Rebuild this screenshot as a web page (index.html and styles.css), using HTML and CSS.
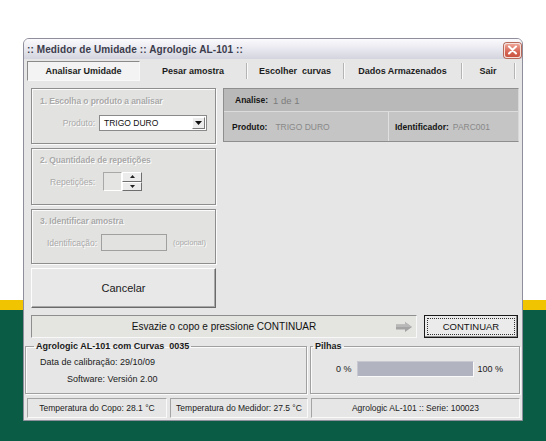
FILE: index.html
```html
<!DOCTYPE html>
<html lang="pt">
<head>
<meta charset="utf-8">
<title>Medidor de Umidade</title>
<link rel="stylesheet" href="styles.css">
</head>
<body>
<div class="window">
  <div class="titlebar">
    <span class="title">:: Medidor de Umidade :: Agrologic AL-101 ::</span>
    <div class="close"><svg width="11" height="10" viewBox="0 0 11 10"><path d="M2 1.5 L9 8.5 M9 1.5 L2 8.5" stroke="#fff" stroke-width="2" stroke-linecap="round"/></svg></div>
  </div>
  <div class="tabs">
    <div class="tab active t1">Analisar Umidade</div>
    <div class="tab t2">Pesar amostra</div>
    <div class="tab t3">Escolher&nbsp; curvas</div>
    <div class="tab t4">Dados Armazenados</div>
    <div class="tab t5">Sair</div>
  </div>
  <div class="main">
    <div class="leftcol">
      <div class="group g1">
        <div class="glabel">1. Escolha o produto a analisar</div>
        <div class="frow r1">
          <span class="flabel w55">Produto:</span>
          <div class="select"><span class="selval">TRIGO DURO</span><span class="selbtn"><svg width="7" height="4" viewBox="0 0 7 4"><path d="M0 0 H7 L3.5 4 Z" fill="#111"/></svg></span></div>
        </div>
      </div>
      <div class="group g2">
        <div class="glabel">2. Quantidade de repetições</div>
        <div class="frow r2">
          <span class="flabel w55">Repetições:</span>
          <div class="spin">
            <span class="spinbox"></span>
            <span class="spinbtns">
              <span class="sb"><svg width="5" height="3" viewBox="0 0 5 3"><path d="M0 3 H5 L2.5 0 Z" fill="#222"/></svg></span>
              <span class="sb"><svg width="5" height="3" viewBox="0 0 5 3"><path d="M0 0 H5 L2.5 3 Z" fill="#222"/></svg></span>
            </span>
          </div>
        </div>
      </div>
      <div class="group g3">
        <div class="glabel">3. Identificar amostra</div>
        <div class="frow r3">
          <span class="flabel w57">Identificação:</span>
          <span class="idbox"></span>
          <span class="opc">(opcional)</span>
        </div>
      </div>
      <div class="cancel">Cancelar</div>
    </div>
    <div class="info">
      <div class="inforow1"><b>Analise:</b><span class="gv">1 de 1</span></div>
      <div class="inforow2">
        <div class="cell c1"><b>Produto:</b><span class="gv2">TRIGO DURO</span></div>
        <div class="cell c2"><b>Identificador:</b><span class="gv2">PARC001</span></div>
      </div>
    </div>
  </div>
  <div class="msgrow">
    <div class="msg">
      <span class="msgtext">Esvazie o copo e pressione CONTINUAR</span>
      <svg class="arrow" width="16" height="10" viewBox="0 0 16 10"><path d="M0 2.5 H9 V0 L16 5 L9 10 V7.5 H0 Z" fill="#a4a4a4"/><path d="M0 2.5 H9 V0 L16 5 L9 5 H0 Z" fill="#b8b8b8"/></svg>
    </div>
    <div class="cont"><span class="focus">CONTINUAR</span></div>
  </div>
  <div class="bottom">
    <fieldset class="fs fs1">
      <legend>Agrologic AL-101 com Curvas&nbsp; 0035</legend>
      <div class="line l1">Data de calibração: 29/10/09</div>
      <div class="line l2">Software: Versión 2.00</div>
    </fieldset>
    <fieldset class="fs fs2">
      <legend>Pilhas</legend>
      <div class="prow">
        <span class="p0">0 %</span>
        <span class="pbar"></span>
        <span class="p100">100 %</span>
      </div>
    </fieldset>
  </div>
  <div class="status">
    <div class="sp s1">Temperatura do Copo: 28.1 °C</div>
    <div class="sp s2">Temperatura do Medidor: 27.5 °C</div>
    <div class="sp s3">Agrologic AL-101 :: Serie: 100023</div>
  </div>
</div>
</body>
</html>
```
FILE: styles.css
```css
* { box-sizing: border-box; }
html, body { margin: 0; padding: 0; }
body {
  width: 546px;
  height: 441px;
  overflow: hidden;
  background: linear-gradient(#ffffff 0, #ffffff 300px, #f0c400 300px, #f0c400 310px, #0b5c44 310px);
  font-family: "Liberation Sans", Arial, sans-serif;
  font-size: 9px;
  color: #222;
}
.window {
  margin: 38px 0 0 23px;
  width: 500px;
  height: 383px;
  border: 1px solid #8e8e9c;
  border-radius: 6px 6px 0 0;
  background: #e6e6e6;
  overflow: hidden;
}
.titlebar {
  height: 20px;
  display: flex;
  align-items: center;
  justify-content: space-between;
  padding: 0 1px 0 3px;
  background: linear-gradient(#fbfbfd, #e6e6ee 55%, #d4d4de);
}
.title { font-size: 10px; font-weight: bold; color: #3c3c4c; letter-spacing: 0.1px; }
.close {
  width: 17px;
  height: 15px;
  margin-top: 2px;
  border-radius: 3px;
  border: 1px solid #f6e0dc;
  box-shadow: 0 0 0 1px #b86a5a;
  background: linear-gradient(#eea496, #d8695a 55%, #c9523f);
  display: flex;
  align-items: center;
  justify-content: center;
}
.tabs { display: flex; height: 20px; margin-top: 2px; padding-left: 3px; }
.tab {
  display: flex;
  align-items: center;
  justify-content: center;
  font-weight: bold;
  font-size: 9px;
  color: #1c1c1c;
  border-right: 1px solid #b4b4b4;
  box-shadow: 1px 0 0 #fafafa;
  margin: 2px 0;
}
.tab.active {
  margin: 0;
  background: #f3f3f3;
  border: 1px solid;
  border-color: #8a8a8a #f8f8f8 #f8f8f8 #8a8a8a;
  box-shadow: none;
}
.t1 { width: 113px; }
.t2 { width: 107px; }
.t3 { width: 97px; }
.t4 { width: 118px; }
.t5 { width: 53px; }

.main { display: flex; gap: 7px; padding: 7px 0 0 7px; }
.leftcol { width: 185px; display: flex; flex-direction: column; gap: 4px; }
.group {
  border: 1px solid #8e8e8e;
  box-shadow: inset 1px 1px 0 #fbfbfb, 1px 1px 0 #fbfbfb;
  background: #e2e2e0;
  padding: 0 8px;
}
.g1 { height: 56px; padding-top: 6px; }
.g2 { height: 57px; padding-top: 5px; }
.g3 { height: 55px; padding-top: 5px; }
.glabel {
  font-size: 8.5px;
  line-height: 12px;
  color: #a9a9a9;
  text-shadow: 1px 1px 0 #fff;
  font-weight: bold;
  letter-spacing: -0.1px;
}
.frow { display: flex; align-items: center; }
.r1 { margin-top: 8px; }
.r2 { margin-top: 6px; }
.r3 { margin-top: 7px; }
.flabel {
  text-align: right;
  font-size: 8.5px;
  color: #a9a9a9;
  text-shadow: 1px 1px 0 #fff;
  flex: none;
}
.w55 { width: 55px; margin-right: 4px; }
.r2 .w55 { margin-right: 8px; }
.w57 { width: 57px; margin-right: 4px; }
.select {
  width: 108px;
  height: 16px;
  border: 1px solid #8a8a8a;
  background: #fff;
  display: flex;
  align-items: center;
  justify-content: space-between;
  padding: 1px;
}
.selval { font-size: 8.5px; color: #111; padding-left: 3px; }
.selbtn {
  width: 13px;
  height: 12px;
  background: #ececec;
  border: 1px solid;
  border-color: #fff #7a7a7a #7a7a7a #fff;
  display: flex;
  align-items: center;
  justify-content: center;
}
.spin { display: flex; }
.spinbox {
  width: 19px;
  height: 19px;
  background: #e4e4e2;
  border: 1px solid;
  border-color: #a8a8a8 #fff #fff #a8a8a8;
}
.spinbtns { display: flex; flex-direction: column; width: 20px; }
.sb {
  height: 9.5px;
  background: #ececec;
  border: 1px solid;
  border-color: #fff #6e6e6e #6e6e6e #fff;
  display: flex;
  align-items: center;
  justify-content: center;
}
.idbox {
  width: 66px;
  height: 17px;
  background: #e2e2e0;
  border: 1px solid #a0a0a0;
  margin-right: 6px;
}
.opc { font-size: 7.5px; color: #a9a9a9; text-shadow: 1px 1px 0 #fff; }
.cancel {
  height: 40px;
  display: flex;
  align-items: center;
  justify-content: center;
  font-size: 11px;
  color: #1a1a1a;
  background: #e8e8e8;
  border: 1px solid;
  border-color: #fdfdfd #6a6a6a #6a6a6a #fdfdfd;
  box-shadow: inset -1px -1px 0 #a8a8a8;
}

.info {
  width: 296px;
  height: 54px;
  border: 1px solid #8e8e8e;
  border-right-color: #d8d8d8;
  background: #c5c5c5;
  display: flex;
  flex-direction: column;
}
.inforow1 {
  height: 23px;
  display: flex;
  align-items: center;
  gap: 5px;
  padding-left: 11px;
  background: #b9b9b9;
  border-bottom: 1px solid #dcdcdc;
  font-size: 8.5px;
  color: #151515;
}
.gv { color: #7c7c7c; font-size: 9.5px; }
.inforow2 { flex: 1; display: flex; font-size: 8.5px; color: #151515; }
.cell { display: flex; align-items: center; gap: 8px; }
.c1 { width: 165px; padding-left: 8px; border-right: 1px solid #e0e0e0; }
.c2 { flex: 1; padding-left: 6px; gap: 4px; }
.gv2 { color: #888; font-size: 8.5px; }

.msgrow { display: flex; gap: 7px; padding: 7px 0 0 7px; }
.msg {
  width: 386px;
  height: 23px;
  display: flex;
  align-items: center;
  justify-content: center;
  position: relative;
  background: #e4e4e0;
  border: 1px solid;
  border-color: #8e8e8e #f8f8f8 #f8f8f8 #8e8e8e;
}
.msgtext { font-size: 10px; color: #111; }
.arrow { position: absolute; right: 4px; top: 6px; }
.cont {
  width: 94px;
  height: 23px;
  border: 1px solid #1a1a1a;
  background: #ebebeb;
  padding: 2px;
  box-shadow: inset -1px -1px 0 #8a8a8a;
}
.focus {
  display: flex;
  height: 100%;
  align-items: center;
  justify-content: center;
  border: 1px dotted #333;
  font-size: 9.5px;
  color: #111;
}

.bottom { display: flex; gap: 3px; padding: 3px 0 0 1px; }
.fs {
  margin: 0;
  height: 53px;
  border: 1px solid #a0a0a0;
  box-shadow: inset 1px 1px 0 #fbfbfb, 1px 1px 0 #fbfbfb;
}
.fs legend { font-size: 9px; font-weight: bold; color: #1a1a1a; padding: 0 2px; line-height: 11px; }
.fs1 { width: 282px; padding: 0 8px; }
.fs2 { width: 210px; padding: 0 2px; }
.line { font-size: 9px; color: #1a1a1a; line-height: 11px; }
.l1 { margin-top: 5px; padding-left: 6px; }
.l2 { margin-top: 6px; padding-left: 33px; }
.prow { display: flex; align-items: center; margin-top: 9px; padding-left: 23px; font-size: 9px; color: #1a1a1a; }
.pbar {
  width: 117px;
  height: 16px;
  margin: 0 4px 0 5px;
  background: #b1b3c1;
  border: 1px solid;
  border-color: #c8c8d0 #fafafa #fafafa #c8c8d0;
}

.status { display: flex; gap: 3px; padding: 4px 0 0 3px; }
.sp {
  height: 20px;
  display: flex;
  align-items: center;
  justify-content: center;
  font-size: 8.5px;
  color: #1a1a1a;
  border: 1px solid;
  border-color: #a4a4a4 #fafafa #fafafa #a4a4a4;
}
.s1 { width: 140px; }
.s2 { width: 138px; }
.s3 { width: 209px; }
```
